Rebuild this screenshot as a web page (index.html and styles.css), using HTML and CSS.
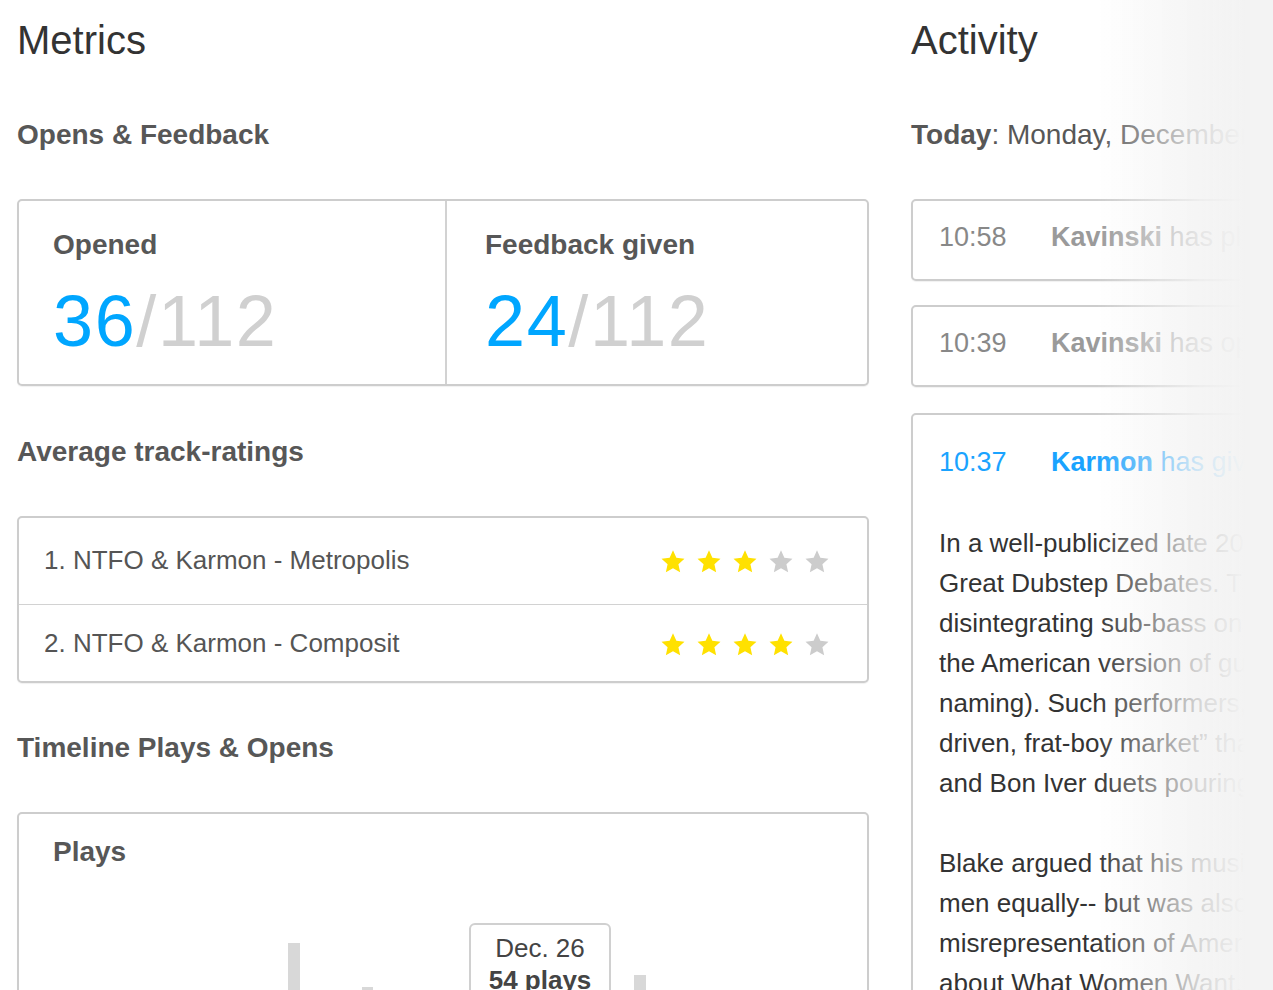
FILE: index.html
```html
<!DOCTYPE html>
<html>
<head>
<meta charset="utf-8">
<title>Metrics</title>
<link rel="stylesheet" href="styles.css">
</head>
<body>
<div class="page">
  <main class="metrics">
    <h1 class="title">Metrics</h1>

    <h2 class="section first">Opens &amp; Feedback</h2>
    <div class="card stats">
      <div class="stat stat-a">
        <div class="stat-label">Opened</div>
        <div class="stat-value"><span class="num">36</span>/112</div>
      </div>
      <div class="stat stat-b">
        <div class="stat-label">Feedback given</div>
        <div class="stat-value"><span class="num">24</span>/112</div>
      </div>
    </div>

    <h2 class="section">Average track-ratings</h2>
    <div class="card ratings">
      <div class="rating-row row-first">
        <span class="track">1. NTFO &amp; Karmon - Metropolis</span>
        <span class="stars">
          <svg class="star on" viewBox="0 0 24 24"><polygon points="12,1.2 15.1,8.1 22.6,8.9 17,14 18.6,21.5 12,17.7 5.4,21.5 7,14 1.4,8.9 8.9,8.1"/></svg>
          <svg class="star on" viewBox="0 0 24 24"><polygon points="12,1.2 15.1,8.1 22.6,8.9 17,14 18.6,21.5 12,17.7 5.4,21.5 7,14 1.4,8.9 8.9,8.1"/></svg>
          <svg class="star on" viewBox="0 0 24 24"><polygon points="12,1.2 15.1,8.1 22.6,8.9 17,14 18.6,21.5 12,17.7 5.4,21.5 7,14 1.4,8.9 8.9,8.1"/></svg>
          <svg class="star off" viewBox="0 0 24 24"><polygon points="12,1.2 15.1,8.1 22.6,8.9 17,14 18.6,21.5 12,17.7 5.4,21.5 7,14 1.4,8.9 8.9,8.1"/></svg>
          <svg class="star off" viewBox="0 0 24 24"><polygon points="12,1.2 15.1,8.1 22.6,8.9 17,14 18.6,21.5 12,17.7 5.4,21.5 7,14 1.4,8.9 8.9,8.1"/></svg>
        </span>
      </div>
      <div class="rating-row row-second">
        <span class="track">2. NTFO &amp; Karmon - Composit</span>
        <span class="stars">
          <svg class="star on" viewBox="0 0 24 24"><polygon points="12,1.2 15.1,8.1 22.6,8.9 17,14 18.6,21.5 12,17.7 5.4,21.5 7,14 1.4,8.9 8.9,8.1"/></svg>
          <svg class="star on" viewBox="0 0 24 24"><polygon points="12,1.2 15.1,8.1 22.6,8.9 17,14 18.6,21.5 12,17.7 5.4,21.5 7,14 1.4,8.9 8.9,8.1"/></svg>
          <svg class="star on" viewBox="0 0 24 24"><polygon points="12,1.2 15.1,8.1 22.6,8.9 17,14 18.6,21.5 12,17.7 5.4,21.5 7,14 1.4,8.9 8.9,8.1"/></svg>
          <svg class="star on" viewBox="0 0 24 24"><polygon points="12,1.2 15.1,8.1 22.6,8.9 17,14 18.6,21.5 12,17.7 5.4,21.5 7,14 1.4,8.9 8.9,8.1"/></svg>
          <svg class="star off" viewBox="0 0 24 24"><polygon points="12,1.2 15.1,8.1 22.6,8.9 17,14 18.6,21.5 12,17.7 5.4,21.5 7,14 1.4,8.9 8.9,8.1"/></svg>
        </span>
      </div>
    </div>

    <h2 class="section last">Timeline Plays &amp; Opens</h2>
    <div class="card timeline">
      <div class="chart-label">Plays</div>
      <div class="chart">
        <div class="bar bar-1"></div>
        <div class="bar bar-2"></div>
        <div class="bar bar-3"></div>
        <div class="tip">
          <div class="tip-date">Dec. 26</div>
          <div class="tip-count">54 plays</div>
        </div>
      </div>
    </div>
  </main>

  <aside class="activity">
    <h1 class="title">Activity</h1>
    <h2 class="section first today"><b>Today</b>: Monday, December 15</h2>

    <div class="card event">
      <span class="time">10:58</span>
      <span class="what"><b>Kavinski</b> has played NTFO &amp; Karmon - Metropolis</span>
    </div>
    <div class="card event">
      <span class="time">10:39</span>
      <span class="what"><b>Kavinski</b> has opened the promo</span>
    </div>
    <div class="card event active">
      <div class="event-head">
        <span class="time">10:37</span>
        <span class="what"><b>Karmon</b> has given feedback</span>
      </div>
      <p class="feedback">In a well-publicized late 2011 exchange dubbed the<br>Great Dubstep Debates. The artist decried the<br>disintegrating sub-bass only aesthetic of<br>the American version of guy music (his<br>naming). Such performers, Blake said, serve a<br>driven, frat-boy market” that wants drops<br>and Bon Iver duets pouring out of speakers</p>
      <p class="feedback">Blake argued that his music appealed to<br>men equally-- but was also quick to call<br>misrepresentation of American tastes<br>about What Women Want, surely a trap</p>
    </div>
  </aside>
</div>
<div class="fade"></div>
</body>
</html>
```

FILE: styles.css
```css
html, body {
  margin: 0;
  padding: 0;
  background: #fff;
  overflow: hidden;
  height: 990px;
}

body {
  font-family: "Liberation Sans", Arial, Helvetica, sans-serif;
  color: #333;
}

.page {
  display: flex;
  align-items: flex-start;
  padding: 16px 0 0 17px;
  width: 1600px;
}

.metrics {
  width: 852px;
  flex: none;
}

.activity {
  width: 600px;
  flex: none;
  margin-left: 42px;
}

.title {
  margin: 0;
  font-size: 40px;
  line-height: 48px;
  font-weight: normal;
  color: #333;
}

.section {
  margin: 50px 0 48px;
  font-size: 28px;
  line-height: 32px;
  font-weight: bold;
  color: #575757;
}

.section.first {
  margin-top: 55px;
}

.card {
  border: 2px solid #cdcdcd;
  border-radius: 5px;
  box-shadow: 0 1px 1px rgba(0, 0, 0, 0.06);
  background: #fff;
}

/* Stats */
.stats {
  display: grid;
  grid-template-columns: 426px 1fr;
}

.stat {
  padding: 28px 0 27px 34px;
}

.stat-b {
  border-left: 2px solid #d2d2d2;
  padding-left: 38px;
}

.stat-label {
  font-size: 28px;
  line-height: 32px;
  font-weight: bold;
  color: #575757;
  margin-bottom: 24px;
}

.stat-value {
  font-size: 72px;
  line-height: 72px;
  color: #d0d0d0;
  letter-spacing: 1.6px;
}

.num {
  color: #00a6ff;
}

/* Ratings */
.rating-row {
  display: flex;
  align-items: center;
  justify-content: space-between;
  padding: 2px 37px 2px 25px;
  height: 72px;
}

.row-first {
  padding-top: 6px;
  padding-bottom: 8px;
}

.row-second {
  border-top: 1px solid #d2d2d2;
}

.track {
  font-size: 26px;
  line-height: 72px;
  color: #555;
}

.stars {
  display: flex;
  gap: 10px;
  margin-top: 4px;
}

.star {
  width: 26px;
  height: 26px;
  display: block;
}

.star.on {
  fill: #ffe100;
}

.star.off {
  fill: #cccccc;
}

/* Timeline */
.section.last {
  margin-top: 49px;
}

.timeline {
  height: 400px;
  padding-top: 22px;
  box-sizing: border-box;
}

.chart-label {
  font-size: 28px;
  line-height: 32px;
  font-weight: bold;
  color: #575757;
  padding-left: 34px;
}

.chart {
  position: relative;
  height: 300px;
}

.bar {
  position: absolute;
  width: 12px;
  height: 200px;
  background: #d8d8d8;
}

.bar-1 { left: 269px; top: 75px; }
.bar-2 { left: 343px; top: 119px; width: 11px; }
.bar-3 { left: 615px; top: 107px; }

.tip {
  position: absolute;
  left: 450px;
  top: 55px;
  width: 138px;
  padding-top: 7px;
  border: 2px solid #d0d0d0;
  border-radius: 6px;
  background: #fff;
  text-align: center;
  font-size: 26px;
  line-height: 32px;
  color: #444;
  height: 120px;
}

.tip-count {
  font-weight: bold;
}

/* Activity */
.today {
  font-weight: normal;
  white-space: nowrap;
}

.today b {
  font-weight: bold;
}

.event {
  display: flex;
  padding: 20px 26px 26px;
  margin-bottom: 24px;
  white-space: nowrap;
  font-size: 27px;
  line-height: 32px;
}

.event .time {
  width: 112px;
  flex: none;
  color: #888;
}

.event .what {
  color: #9a9a9a;
}

.event .what b {
  font-weight: bold;
}

.event.active {
  display: block;
  margin-top: 26px;
  padding-top: 31px;
  height: 700px;
}

.event-head {
  display: flex;
}

.event.active .time,
.event.active .what {
  color: #1aa3ff;
}

.feedback {
  margin: 45px 0 0;
  font-size: 26px;
  line-height: 40px;
  color: #333;
}

.feedback + .feedback {
  margin-top: 40px;
}

/* Fade overlay on the right edge */
.fade {
  position: fixed;
  top: 0;
  right: 0;
  width: 373px;
  height: 990px;
  pointer-events: none;
  background: linear-gradient(to right,
    rgba(243, 243, 243, 0) 0px,
    rgba(243, 243, 243, 0) 195px,
    rgba(243, 243, 243, 0.45) 250px,
    rgba(243, 243, 243, 0.85) 300px,
    rgba(243, 243, 243, 1) 345px);
}
```
